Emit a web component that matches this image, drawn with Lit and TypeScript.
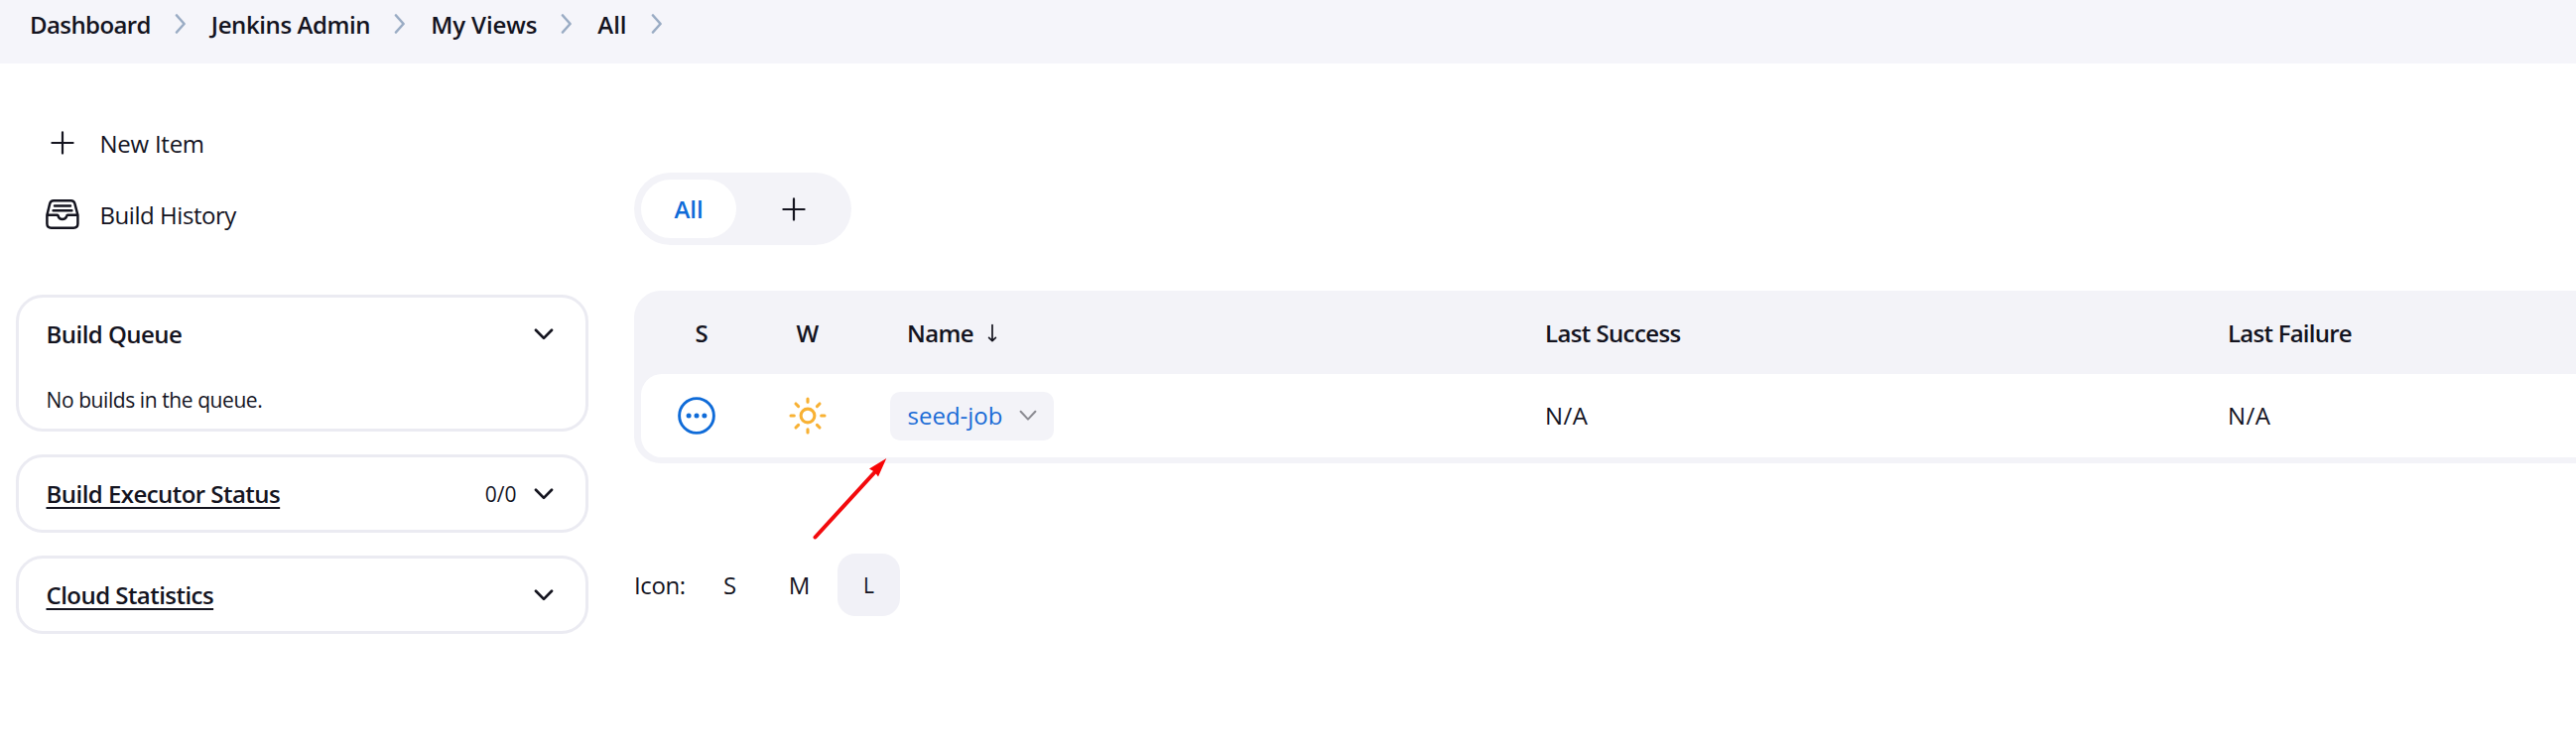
import { LitElement, html, css, svg, nothing } from "lit";
import { customElement, property } from "lit/decorators.js";

const icons = {
  crumb: svg`<svg width="12" height="20" viewBox="0 0 12 20"><path d="M2 1.5 9.6 10 2 18.5" fill="none" stroke="#9aacc4" stroke-width="2.6" stroke-linecap="round" stroke-linejoin="round"/></svg>`,
  down: svg`<svg width="20" height="12" viewBox="0 0 20 12"><path d="M2 1.8 10 9.9 18 1.8" fill="none" stroke="currentColor" stroke-width="2.7" stroke-linecap="round" stroke-linejoin="round"/></svg>`,
  downThin: svg`<svg width="18" height="12" viewBox="0 0 18 12"><path d="M1.6 1.8 9 9.6 16.4 1.8" fill="none" stroke="#8b8b92" stroke-width="2.1" stroke-linecap="round" stroke-linejoin="round"/></svg>`,
  plus: svg`<svg width="36" height="36" viewBox="0 0 36 36"><path d="M18 7.4v21.2M7.4 18h21.2" fill="none" stroke="currentColor" stroke-width="2.2" stroke-linecap="round"/></svg>`,
  tray: svg`<svg width="36" height="36" viewBox="0 0 36 36"><g fill="none" stroke="currentColor" stroke-width="2.5" stroke-linecap="round" stroke-linejoin="round"><path d="M2.4 18.8 5.2 7.3Q6 4.3 9 4.3H26.6Q29.6 4.3 30.4 7.3L33.4 18.8V27.5Q33.4 31.7 29.2 31.7H6.6Q2.4 31.7 2.4 27.5ZM2.4 18.8H12.8Q13.5 18.8 13.6 19.8A4.5 4.5 0 0 0 22.2 19.8Q22.4 18.8 23.2 18.8H33.4"/><path d="M10 9.5H26M8.6 14.2H27.4"/></g></svg>`,
  pending: svg`<svg width="40" height="40" viewBox="0 0 40 40"><circle cx="20" cy="20" r="17.4" fill="none" stroke="#0f6bd8" stroke-width="2.9"/><g fill="#0f6bd8"><circle cx="12.1" cy="20" r="2.5"/><circle cx="20" cy="20" r="2.5"/><circle cx="27.9" cy="20" r="2.5"/></g></svg>`,
  sun: svg`<svg width="40" height="40" viewBox="0 0 40 40"><g fill="none" stroke="#f8b133" stroke-width="3.1" stroke-linecap="round"><circle cx="20" cy="20" r="6.9"/><path d="M20 3v3.3M20 33.7V37M3 20H6.3M33.7 20H37M8 8l2.6 2.6M29.4 29.4 32 32M8 32l2.6-2.6M29.4 10.6 32 8"/></g></svg>`,
  sort: svg`<svg width="10" height="20" viewBox="0 0 10 20"><path d="M5 1.6V17M1.6 14.4 5 17.6 8.4 14.4" fill="none" stroke="currentColor" stroke-width="1.7" stroke-linecap="round" stroke-linejoin="round"/></svg>`,
};

const base = css`
  :host { display: block; }
  * { box-sizing: border-box; }
  svg { display: block; flex: none; }
`;

@customElement("crumb-bar")
class CrumbBar extends LitElement {
  static styles = [base, css`
    .bar { display: flex; align-items: flex-start; height: 64px; padding: 9px 0 0 30px; background: #f5f5fa; }
    .text { font-weight: 600; letter-spacing: -0.6px; line-height: 32px; }
    .admin { letter-spacing: -0.4px; margin-left: 1px; }
    .views { letter-spacing: -0.1px; margin-left: 1px; }
    .all { letter-spacing: 0; margin-left: 1px; }
    .sep { margin: 5px 24px 0; }
  `];
  render() {
    const crumbs = [["Dashboard", ""], ["Jenkins Admin", "admin"], ["My Views", "views"], ["All", "all"]];
    return html`<nav class="bar">${crumbs.map(([t, c]) => html`<span class="text ${c}">${t}</span><span class="sep">${icons.crumb}</span>`)}</nav>`;
  }
}

@customElement("side-card")
class SideCard extends LitElement {
  @property() heading = "";
  @property() count = "";
  @property() body = "";
  @property({ type: Boolean }) link = false;
  static styles = [base, css`
    .card { border: 3px solid #ebebf2; border-radius: 27px; }
    .head { display: flex; align-items: center; height: 73px; padding: 0 32.5px 0 27.5px; }
    .title { font-weight: 600; letter-spacing: -0.54px; line-height: 32px; }
    .link { text-decoration: underline; text-decoration-thickness: 2px; text-underline-offset: 4px; text-decoration-skip-ink: none; }
    .count { margin-left: auto; margin-right: 17px; font-size: 21px; }
    .chev:not(.count + .chev) { margin-left: auto; }
    .body { padding: 15px 27.5px 14px; font-size: 21px; line-height: 30px; letter-spacing: -0.42px; }
  `];
  render() {
    return html`<section class="card">
      <div class="head">
        <span class="title ${this.link ? "link" : ""}">${this.heading}</span>
        ${this.count ? html`<span class="count">${this.count}</span>` : nothing}
        <span class="chev">${icons.down}</span>
      </div>
      ${this.body ? html`<div class="body">${this.body}</div>` : nothing}
    </section>`;
  }
}

@customElement("job-table")
class JobTable extends LitElement {
  static styles = [base, css`
    .table { padding: 0 0 6px 7px; background: #f3f3f8; border-radius: 27px 0 0 27px; }
    .row { display: grid; grid-template-columns: 130px 119px 643px 688px 1fr; align-items: center; height: 84px; }
    .head { padding-top: 1px; font-weight: 600; letter-spacing: -0.6px; }
    .head .s { padding-left: 54.5px; }
    .head .w { padding-left: 26.5px; }
    .cell { padding-left: 19px; }
    .name { display: flex; align-items: center; gap: 14px; }
    .head .fail { letter-spacing: -0.75px; }
    .data { background: #fff; border-radius: 21px 0 0 21px; }
    .value { letter-spacing: 0.5px; }
    .status { padding-left: 36px; }
    .weather { padding-left: 18px; }
    .chip { display: inline-flex; align-items: center; gap: 17px; height: 49px; width: 165px; margin-left: 2px; padding-left: 17.5px; border-radius: 10px; background: #f3f3f8; color: #1a6bd6; }
  `];
  render() {
    return html`<div class="table">
      <div class="row head">
        <span class="s">S</span><span class="w">W</span>
        <span class="cell name">Name ${icons.sort}</span>
        <span class="cell">Last Success</span><span class="cell fail">Last Failure</span>
      </div>
      <div class="row data">
        <span class="status">${icons.pending}</span><span class="weather">${icons.sun}</span>
        <span><span class="chip">seed-job ${icons.downThin}</span></span>
        <span class="cell value">N/A</span><span class="cell value">N/A</span>
      </div>
    </div>`;
  }
}

@customElement("app-root")
class AppRoot extends LitElement {
  static styles = [base, css`
    :host { position: relative; height: 758px; overflow: hidden; background: #fff; color: #14141f; font: 24px/32px "Open Sans", "Noto Sans", sans-serif; }
    .page { display: flex; align-items: flex-start; }
    .side { flex: none; width: 577px; margin: 44px 46px 0 16px; }
    .task { display: flex; align-items: center; gap: 19.5px; height: 72px; padding-left: 29px; letter-spacing: -0.25px; }
    .task span { padding-top: 1px; }
    .history { letter-spacing: -0.45px; }
    .cards { display: flex; flex-direction: column; gap: 23px; margin-top: 45px; }
    .main { flex: 1; min-width: 0; padding-top: 110px; }
    .tabs { display: flex; gap: 7px; width: 219px; height: 73px; padding: 7px; margin-bottom: 46px; border-radius: 37px; background: #f3f3f8; }
    .tab { display: flex; align-items: center; justify-content: center; width: 102px; }
    .active { width: 96px; border-radius: 30px; background: #fff; color: #0f6bd8; font-weight: 600; }
    .sizes { display: flex; align-items: center; gap: 7px; margin-top: 91px; }
    .label { width: 58px; letter-spacing: -0.4px; }
    .size { display: flex; align-items: center; justify-content: center; width: 63px; height: 63px; border-radius: 18px; }
    .current { background: #f1f1f7; font-size: 21px; }
    .arrow { position: absolute; left: 815px; top: 458px; }
  `];
  render() {
    return html`<crumb-bar></crumb-bar>
      <div class="page">
        <aside class="side">
          <div class="task">${icons.plus}<span>New Item</span></div>
          <div class="task history">${icons.tray}<span>Build History</span></div>
          <div class="cards">
            <side-card heading="Build Queue" body="No builds in the queue."></side-card>
            <side-card heading="Build Executor Status" count="0/0" link></side-card>
            <side-card heading="Cloud Statistics" link></side-card>
          </div>
        </aside>
        <main class="main">
          <div class="tabs"><span class="tab active">All</span><span class="tab">${icons.plus}</span></div>
          <job-table></job-table>
          <div class="sizes">
            <span class="label">Icon:</span><span class="size">S</span><span class="size">M</span><span class="size current">L</span>
          </div>
        </main>
      </div>
      <svg class="arrow" width="84" height="90" viewBox="0 0 84 90"><path d="M6.5 83.5 67 17.5" stroke="#f30a0d" stroke-width="4" stroke-linecap="round"/><path d="M78.3 4 61 14.4 65.2 17 67.8 19.4 70 22.6Z" fill="#f80406"/></svg>`;
  }
}
